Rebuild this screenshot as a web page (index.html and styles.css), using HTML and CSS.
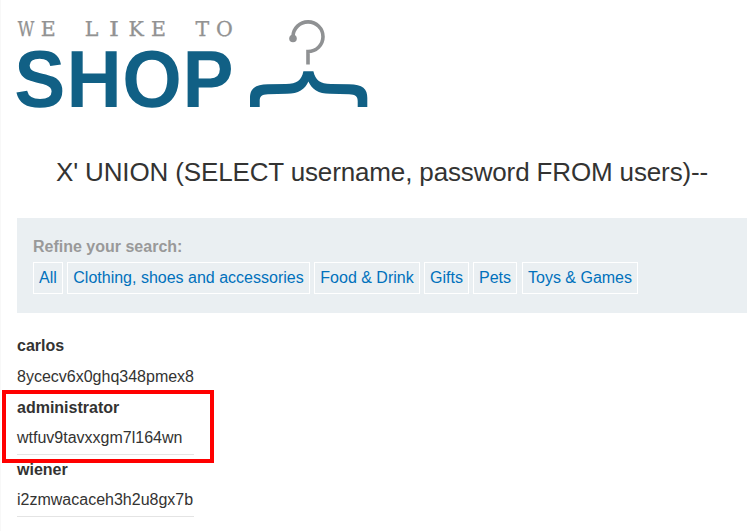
FILE: index.html
```html
<!DOCTYPE html>
<html lang="en">
<head>
<meta charset="utf-8">
<title>We Like to Shop</title>
<link rel="stylesheet" href="styles.css">
</head>
<body>
<main class="page">
  <header class="logo">
    <svg width="370" height="100" viewBox="15 15 370 100" role="img" aria-label="We like to shop">
      <text class="logo-small" y="35.500"><tspan x="26" textLength="16.500" lengthAdjust="spacingAndGlyphs">W</tspan><tspan x="48.200 70 91.600">E L</tspan><tspan x="114" textLength="10" lengthAdjust="spacingAndGlyphs">I</tspan><tspan x="136.200 158.500 180 202.300 224.500">KE TO</tspan></text>
      <text class="logo-big" x="42.200 99.500 161 220.200" y="107" transform="scale(.945 1)">SHOP</text>
      <path class="hook" d="M293 38.500 V36.500 A15 14.800 0 1 1 308 51.500 V64.500"/>
      <circle class="hook-end" cx="293" cy="38.500" r="3.800"/>
      <path class="hanger" d="M303.400 71.300 H313.400 C315.500 80.500 320 83.800 331 84 L349 84.300 C363 84.600 367.300 89 367.300 98 V107 H357.700 V101 C357.700 96.500 355.500 94.300 349 94.200 L330 93.800 C318 93.500 312 89.500 308.400 81.500 C305 89.500 298.500 93.500 287 93.800 L268 94.200 C261.500 94.300 259.700 96.500 259.700 101 V107 H250 V98 C250 89 254.500 84.600 268 84.300 L286 84 C297 83.800 301.500 80.500 303.400 71.300 Z"/>
    </svg>
  </header>
  <h1 class="title">X' UNION (SELECT username, password FROM users)--</h1>
  <section class="filters">
    <h2 class="filters-title">Refine your search:</h2>
    <nav class="filter-list">
      <a class="filter all">All</a>
      <a class="filter clothing">Clothing, shoes and accessories</a>
      <a class="filter food">Food &amp; Drink</a>
      <a class="filter gifts">Gifts</a>
      <a class="filter pets">Pets</a>
      <a class="filter toys">Toys &amp; Games</a>
    </nav>
  </section>
  <section class="users">
    <div class="user first"><b>carlos</b><span>8ycecv6x0ghq348pmex8</span></div>
    <div class="user"><b>administrator</b><span>wtfuv9tavxxgm7l164wn</span></div>
    <div class="user"><b>wiener</b><span>i2zmwacaceh3h2u8gx7b</span></div>
    <div class="highlight"></div>
  </section>
</main>
</body>
</html>
```
FILE: styles.css
```css
* { box-sizing: border-box; }
body {
  margin: 0;
  height: 531px;
  overflow: hidden;
  background: #fff;
  color: #333332;
  font: 16px/20px "Liberation Sans", Arial, sans-serif;
  border-left: 1px solid #f8f8f8;
}
.page { padding: 15px 9px 0 16px; }
.logo { height: 100px; margin-left: -2px; }
.logo svg { display: block; overflow: visible; }
.logo-small {
  font: 20.5px "DejaVu Serif", serif;
  fill: #929292;
  stroke: #929292;
  stroke-width: .3;
  text-anchor: middle;
  text-rendering: geometricPrecision;
}
.logo-big {
  font: bold 81px "Liberation Sans", Arial, sans-serif;
  fill: #116085;
  text-anchor: middle;
  text-rendering: geometricPrecision;
}
.hook { fill: none; stroke: #8f9193; stroke-width: 3.6; }
.hook-end { fill: #8f9193; }
.hanger { fill: #116085; }
.title {
  margin: 41px 0 0;
  height: 62px;
  font-size: 26px;
  line-height: 32px;
  font-weight: 400;
  letter-spacing: -.14px;
  text-align: center;
  white-space: nowrap;
}
.filters { height: 95px; padding: 19px 16px 18px; background: #eaeff2; }
.filters-title { margin: 0; height: 25px; font-size: 16px; line-height: 20px; color: #999; }
.filter-list { display: flex; gap: 4px; }
.filter {
  height: 32px;
  border: 1px solid #fff;
  line-height: 29px;
  text-align: center;
  color: #0071bc;
  white-space: nowrap;
}
.all { width: 30px; }
.clothing { width: 243px; }
.food { width: 106px; }
.gifts { width: 45px; }
.pets { width: 44px; }
.toys { width: 116px; margin-left: 1px; }
.users { position: relative; width: 177px; margin-top: 18px; }
.user {
  display: flex;
  flex-direction: column;
  gap: 10px;
  height: 62px;
  padding-top: 5px;
  border-bottom: 1px solid #e4e4e4;
}
.first { gap: 11px; }
.highlight {
  position: absolute;
  left: -15px;
  top: 59px;
  width: 212px;
  height: 73px;
  border: 4px solid #f00;
}
```
